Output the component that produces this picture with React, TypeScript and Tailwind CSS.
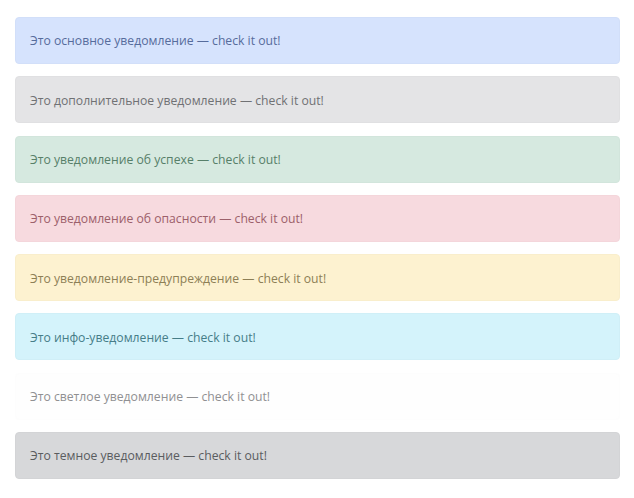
const ALERTS: { text: string; className: string }[] = [
  { text: "Это основное уведомление — check it out!", className: "bg-[#d6e3fd] border-[#d2dff9] text-[#566c9c]" },
  { text: "Это дополнительное уведомление — check it out!", className: "bg-[#e4e4e6] border-[#e0e0e2] text-[#707174]" },
  { text: "Это уведомление об успехе — check it out!", className: "bg-[#d6e9e0] border-[#d2e5dc] text-[#577f69]" },
  { text: "Это уведомление об опасности — check it out!", className: "bg-[#f7dadf] border-[#f4d6db] text-[#9c606a]" },
  { text: "Это уведомление-предупреждение — check it out!", className: "bg-[#fdf2d0] border-[#f9eecc] text-[#8d7f56]" },
  { text: "Это инфо-уведомление — check it out!", className: "bg-[#d4f3fb] border-[#d0eff7] text-[#467d88]" },
  { text: "Это светлое уведомление — check it out!", className: "bg-[#fefefe] border-[#fdfdfd] text-[#909092]" },
  { text: "Это темное уведомление — check it out!", className: "bg-[#d7d8da] border-[#d3d4d6] text-[#5a5c5f]" },
];

export default function App() {
  return (
    <div className="w-[634px] h-[498px] bg-white pt-[17px] px-[15px] font-['Open_Sans',sans-serif]">
      <div className="flex flex-col gap-[12.3px] w-[605px]">
        {ALERTS.map((a) => (
          <div
            key={a.text}
            className={`h-[47px] flex items-center px-[14px] pt-[2px] border rounded-[4px] text-[12.2px] ${a.className}`}
          >
            {a.text}
          </div>
        ))}
      </div>
    </div>
  );
}
